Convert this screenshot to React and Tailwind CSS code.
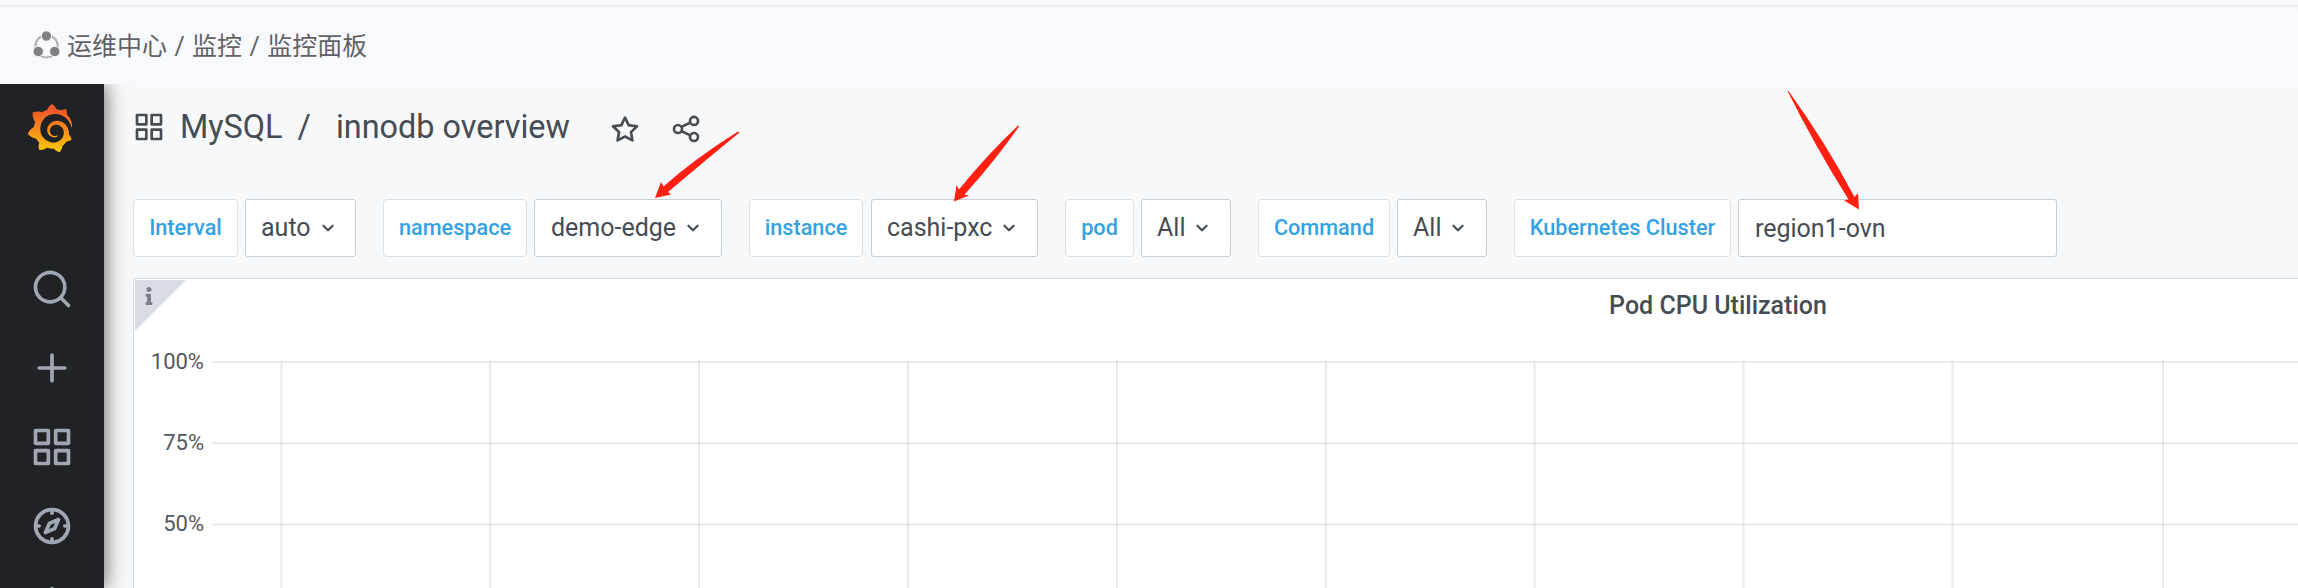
import React from "react";
import { SiGrafana } from "react-icons/si";
import { FaInfo } from "react-icons/fa";

const paths = {
  apps: "M10,13H3a1,1,0,0,0-1,1v7a1,1,0,0,0,1,1h7a1,1,0,0,0,1-1V14A1,1,0,0,0,10,13ZM9,20H4V15H9ZM21,2H14a1,1,0,0,0-1,1v7a1,1,0,0,0,1,1h7a1,1,0,0,0,1-1V3A1,1,0,0,0,21,2ZM20,9H15V4h5Zm1,4H14a1,1,0,0,0-1,1v7a1,1,0,0,0,1,1h7a1,1,0,0,0,1-1V14A1,1,0,0,0,21,13Zm-1,7H15V15h5ZM10,2H3A1,1,0,0,0,2,3v7a1,1,0,0,0,1,1h7a1,1,0,0,0,1-1V3A1,1,0,0,0,10,2ZM9,9H4V4H9Z",
  search: "M21.71,20.29,18,16.61A9,9,0,1,0,16.61,18l3.68,3.68a1,1,0,0,0,1.42,0A1,1,0,0,0,21.71,20.29ZM11,18a7,7,0,1,1,7-7A7,7,0,0,1,11,18Z",
  plus: "M19,11H13V5a1,1,0,0,0-2,0v6H5a1,1,0,0,0,0,2h6v6a1,1,0,0,0,2,0V13h6a1,1,0,0,0,0-2Z",
  compass: "M12,2A10,10,0,1,0,22,12,10,10,0,0,0,12,2Zm1,17.93V19a1,1,0,0,0-2,0v.93A8,8,0,0,1,4.07,13H5a1,1,0,0,0,0-2H4.07A8,8,0,0,1,11,4.07V5a1,1,0,0,0,2,0V4.07A8,8,0,0,1,19.93,11H19a1,1,0,0,0,0,2h.93A8,8,0,0,1,13,19.93ZM15.14,7.55l-5,2.12a1,1,0,0,0-.52.52l-2.12,5a1,1,0,0,0,.21,1.1,1,1,0,0,0,.7.3.93.93,0,0,0,.4-.09l5-2.12a1,1,0,0,0,.52-.52l2.12-5a1,1,0,0,0-1.31-1.31Zm-2.49,5.1-2.28,1,1-2.28,2.28-1Z",
  bell: "M18,13.18V10a6,6,0,0,0-5-5.91V3a1,1,0,0,0-2,0V4.09A6,6,0,0,0,6,10v3.18A3,3,0,0,0,4,16v2a1,1,0,0,0,1,1H8.14a4,4,0,0,0,7.72,0H19a1,1,0,0,0,1-1V16A3,3,0,0,0,18,13.18Z",
  star: "M22,9.67A1,1,0,0,0,21.14,9l-5.69-.83L12.9,3a1,1,0,0,0-1.8,0L8.55,8.16,2.86,9a1,1,0,0,0-.81.68,1,1,0,0,0,.25,1l4.13,4-1,5.68A1,1,0,0,0,6.9,21.44L12,18.77l5.1,2.67a.93.93,0,0,0,.46.12,1,1,0,0,0,.59-.19,1,1,0,0,0,.4-1l-1-5.68,4.13-4A1,1,0,0,0,22,9.67Zm-6.15,4a1,1,0,0,0-.29.88l.72,4.2-3.76-2a1.06,1.06,0,0,0-.94,0l-3.76,2,.72-4.2a1,1,0,0,0-.29-.88l-3-3,4.21-.61a1,1,0,0,0,.76-.55L12,5.7l1.88,3.82a1,1,0,0,0,.76.55l4.21.61Z",
  share: "M18,14a4,4,0,0,0-3.08,1.48l-5.1-2.35a3.64,3.64,0,0,0,0-2.26l5.1-2.35A4,4,0,1,0,14,6a4.17,4.17,0,0,0,.07.71L8.79,9.14a4,4,0,1,0,0,5.72l5.28,2.43A4.17,4.17,0,0,0,14,18a4,4,0,1,0,4-4ZM18,4a2,2,0,1,1-2,2A2,2,0,0,1,18,4ZM6,14a2,2,0,1,1,2-2A2,2,0,0,1,6,14Zm12,6a2,2,0,1,1,2-2A2,2,0,0,1,18,20Z",
  down: "M17,9.17a1,1,0,0,0-1.41,0L12,12.71,8.46,9.17a1,1,0,0,0-1.41,0,1,1,0,0,0,0,1.42l4.24,4.24a1,1,0,0,0,1.42,0L17,10.59A1,1,0,0,0,17,9.17Z",
};

function Icon({ name, className }) {
  return (
    <svg viewBox="0 0 24 24" fill="currentColor" className={"shrink-0 " + className}>
      <path d={paths[name]} />
    </svg>
  );
}

function Breadcrumb() {
  return (
    <header className="z-20 flex h-[79px] shrink-0 items-center bg-[#f8f9fd] pl-8 shadow-[inset_0_5px_5px_-4px_rgba(0,0,0,0.08)]">
      <svg viewBox="0 0 30 30" className="h-[30px] w-[30px]">
        <circle cx="14.6" cy="16.2" r="11.2" fill="none" stroke="#b0b1b4" strokeWidth="2" />
        <g fill="#7e8083" stroke="#f8f9fd" strokeWidth="1">
          <circle cx="14.4" cy="6" r="5.2" />
          <circle cx="6.2" cy="21.5" r="5.2" />
          <circle cx="22.8" cy="21.5" r="5.2" />
        </g>
      </svg>
      <nav className="ml-[5px] mt-[5px] whitespace-pre text-[25px] leading-8 text-[#606266] [word-spacing:1.2px]">运维中心 / 监控 / 监控面板</nav>
    </header>
  );
}

function Sidebar() {
  return (
    <aside className="z-10 flex w-[104px] shrink-0 flex-col items-center bg-[#212226] pr-px shadow-[0_0_20px_rgba(0,0,0,0.65)]">
      <svg className="h-0 w-0 shrink-0">
        <defs>
          <linearGradient id="flame" x1="0" y1="0" x2="0" y2="1">
            <stop offset="0.15" stopColor="#f05a28" />
            <stop offset="1" stopColor="#fbca0a" />
          </linearGradient>
        </defs>
      </svg>
      <SiGrafana fill="url(#flame)" className="mr-[3px] mt-5 h-12 w-12 shrink-0" />
      <nav className="mt-[115px] flex flex-col items-center gap-[35px] text-[#9fa7b3]">
        <Icon name="search" className="h-11 w-11" />
        <Icon name="plus" className="h-11 w-11" />
        <Icon name="apps" className="h-11 w-11" />
        <Icon name="compass" className="h-11 w-11" />
        <Icon name="bell" className="h-11 w-11" />
      </nav>
    </aside>
  );
}

function Label({ className, children }) {
  return (
    <div className={"flex shrink-0 items-center justify-center rounded-[4px] border border-[#dce1e6] bg-white text-[21.7px] font-medium text-[#33a2e5] " + className}>
      {children}
    </div>
  );
}

function Value({ className, children, menu = true }) {
  return (
    <div className={"flex shrink-0 items-center rounded-[3px] border border-[#c7d0d9] bg-white text-[25px] text-[#464c54] " + className}>
      {children}
      {menu && <Icon name="down" className="ml-1 h-[26px] w-[26px]" />}
    </div>
  );
}

function Variables() {
  return (
    <div className="mt-[55px] flex h-[58px] whitespace-nowrap">
      <Label className="w-[105px]">Interval</Label>
      <Value className="ml-[7px] w-[111px] pl-[15px]">auto</Value>
      <Label className="ml-[27px] w-[144px]">namespace</Label>
      <Value className="ml-[7px] w-[188px] pl-4">demo-edge</Value>
      <Label className="ml-[27px] w-[114px]">instance</Label>
      <Value className="ml-[8px] w-[167px] pl-[15px]">cashi-pxc</Value>
      <Label className="ml-[27px] w-[69px]">pod</Label>
      <Value className="ml-[7px] w-[90px] pl-[15px]">All</Value>
      <Label className="ml-[27px] w-[132px]">Command</Label>
      <Value className="ml-[7px] w-[90px] pl-[15px]">All</Value>
      <Label className="ml-[27px] w-[217px]">Kubernetes Cluster</Label>
      <Value menu={false} className="ml-[7px] w-[319px] pl-4 pt-[2px]">region1-ovn</Value>
    </div>
  );
}

const columns = [281.5, 490, 699, 908, 1117, 1326, 1534.5, 1743.5, 1952.5, 2163];

function Panel() {
  return (
    <section className="relative mt-[21px] flex w-[3168px] flex-1 flex-col rounded-tl-[4px] border-l border-t border-[#d5dde4] bg-white">
      <div className="absolute left-px top-px h-[51px] w-[51px] bg-[#d8dde5] [clip-path:polygon(0_0,100%_0,0_100%)]">
        <FaInfo className="ml-[9px] mt-[7px] h-[18px] w-[10px] text-[#7b8087]" />
      </div>
      <h2 className="flex h-[54px] items-center justify-center pl-px text-[25px] font-medium text-[#464c54]">Pod CPU Utilization</h2>
      <div className="flex flex-1">
        <div className="flex w-[70px] flex-col items-end pt-[15px] text-[22px] leading-[28px] text-[#52575f]">
          <span>100%</span>
          <span className="mt-[53px]">75%</span>
          <span className="mt-[53px]">50%</span>
        </div>
        <svg viewBox="212 333 2086 255" className="ml-2 h-[255px] w-[2086px]" fill="none" stroke="#000" strokeOpacity="0.08" strokeWidth="2">
          {[362, 443.3, 524.6].map((y) => (
            <path key={y} d={`M212 ${y}H2298`} />
          ))}
          {columns.map((x) => (
            <path key={x} d={`M${x} 361V588`} />
          ))}
        </svg>
      </div>
    </section>
  );
}

function Arrows() {
  return (
    <svg viewBox="0 0 2298 588" className="pointer-events-none absolute inset-0 z-20 h-[588px] w-[2298px]" fill="#ff2012">
      <path d="M738 131.5L739.5 132.500Q706 160 668 192L671 194.500L655 198L661 182L663.500 186.500Q694 159 738 131.500Z" />
      <path d="M1018 125.500L1019 126.500Q994 162 964.500 194.500L969 195.500L954 201.500L956.500 185L959 189.500Q986 156 1018 125.500Z" />
      <path d="M1787.500 91L1788.500 91Q1826 143 1854.500 197L1858 193L1859 209.500L1844 200.500L1848.500 199.500Q1815 146 1787.500 91Z" />
    </svg>
  );
}

export default function App() {
  return (
    <div className="relative flex h-[588px] w-[2298px] flex-col overflow-hidden bg-[#f7f8fa] pt-[5px] font-[Roboto,'Noto_Sans_CJK_SC',sans-serif]">
      <Breadcrumb />
      <div className="flex min-h-0 flex-1">
        <Sidebar />
        <main className="flex min-w-0 flex-1 flex-col pl-[29px]">
          <div className="mt-7 flex h-8 items-center whitespace-pre text-[32.4px] text-[#464c54]">
            <Icon name="apps" className="mt-[-3px] h-8 w-8" />
            <span className="ml-[15px] mt-[-1px]">MySQL</span>
            <span className="ml-[15px] mt-[-1px]">/</span>
            <span className="ml-[25px] mt-[-1px]">innodb overview</span>
            <Icon name="star" className="ml-[39px] mt-[2px] h-8 w-8" />
            <Icon name="share" className="ml-[29px] mt-[2px] h-8 w-8" />
          </div>
          <Variables />
          <Panel />
        </main>
      </div>
      <Arrows />
    </div>
  );
}
